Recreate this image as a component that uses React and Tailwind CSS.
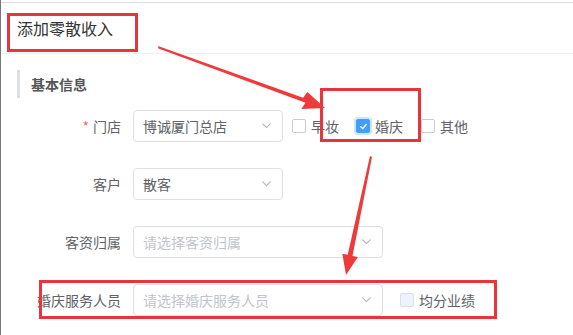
const labelCls = "w-[132px] pr-[12px] text-right text-[14px] text-[#606266] shrink-0";

function Chevron() {
  return (
    <svg className="w-[9px] h-[6px] text-[#b4b8bf]" viewBox="0 0 9 6" fill="none" stroke="currentColor">
      <path d="M0.8 0.8 L4.5 4.6 L8.2 0.8" strokeWidth={1.2} strokeLinecap="round" strokeLinejoin="round" />
    </svg>
  );
}

function Select({ width, value, placeholder }) {
  return (
    <div className={`${width} h-[32px] border border-[#dcdfe6] rounded-[4px] flex items-center pl-[9px] pr-[11px] shrink-0`}>
      <span className={`flex-1 text-[14px] ${value ? "text-[#606266]" : "text-[#c0c4cc]"}`}>{value || placeholder}</span>
      <Chevron />
    </div>
  );
}

function Check({ label, checked, disabled, className = "" }) {
  let box = "bg-white border-[#c8ccd3]";
  if (checked) box = "bg-[#409eff] border-[#409eff] shadow-[0_0_0_2px_#cfe5ff]";
  if (disabled) box = "bg-[#edf2fc] border-[#dcdfe6]";
  return (
    <div className={`flex items-center ${className}`}>
      <span className={`w-[14px] h-[14px] rounded-[2px] border flex items-center justify-center ${box}`}>
        {checked && (
          <svg className="w-[9px] h-[9px]" viewBox="0 0 10 10" fill="none" stroke="white">
            <path d="M2 5.2 L4.2 7.2 L8 2.8" strokeWidth={1.6} strokeLinecap="round" strokeLinejoin="round" />
          </svg>
        )}
      </span>
      <span className="ml-[5px] text-[14px] text-[#606266]">{label}</span>
    </div>
  );
}

function Arrows() {
  return (
    <svg className="absolute inset-0 pointer-events-none" width="573" height="335" viewBox="0 0 573 335">
      <polygon fill="#ee3a3a" points="157,46 157.5,48.5 304.6,102.8 300.2,109 324,108 306.4,92 302,97.8" />
      <polygon fill="#ee3a3a" points="369,156 371,157 351.5,255.9 356.9,257.1 345,275 341.3,253.7 346.7,254.8" />
    </svg>
  );
}

export default function App() {
  return (
    <div className="relative w-[573px] h-[335px] overflow-hidden bg-white border-l border-[#777] font-['Noto_Sans_CJK_SC','Microsoft_YaHei',sans-serif]">
      <div className="h-[2px]" />
      <div className="h-[52px] border-t border-b border-t-[#dedede] border-b-[#ebeef5] flex items-center pl-[16px] text-[16px] text-[#333]">
        添加零散收入
      </div>

      <div className="pl-[16px] mt-[16px]">
        <div className="h-[28px] border-l-[3px] border-[#dcdfe6] pl-[11px] flex items-center text-[14px] font-bold text-[#555]">
          基本信息
        </div>
      </div>

      <div className="mt-[12px] flex flex-col gap-[26px]">
        <div className="flex items-center h-[32px]">
          <div className={labelCls}>
            <span className="text-[#f56c6c] mr-[4px]">*</span>门店
          </div>
          <Select width="w-[150px]" value="博诚厦门总店" />
          <Check label="早妆" className="ml-[9px]" />
          <Check label="婚庆" checked className="ml-[17px]" />
          <Check label="其他" className="ml-[18px]" />
        </div>
        <div className="flex items-center h-[32px]">
          <div className={labelCls}>客户</div>
          <Select width="w-[150px]" value="散客" />
        </div>
        <div className="flex items-center h-[32px]">
          <div className={labelCls}>客资归属</div>
          <Select width="w-[250px]" placeholder="请选择客资归属" />
        </div>
        <div className="flex items-center h-[32px]">
          <div className={labelCls}>婚庆服务人员</div>
          <Select width="w-[250px]" placeholder="请选择婚庆服务人员" />
          <Check label="均分业绩" disabled className="ml-[17px]" />
        </div>
      </div>

      {/* annotations */}
      <div className="absolute left-[6px] top-[13px] w-[131px] h-[39px] border-[3px] border-[#e8353b]" />
      <div className="absolute left-[319px] top-[88px] w-[101px] h-[54px] border-[3px] border-[#e8353b]" />
      <div className="absolute left-[38px] top-[280px] w-[458px] h-[39px] border-[3px] border-[#e8353b]" />
      <Arrows />
    </div>
  );
}
